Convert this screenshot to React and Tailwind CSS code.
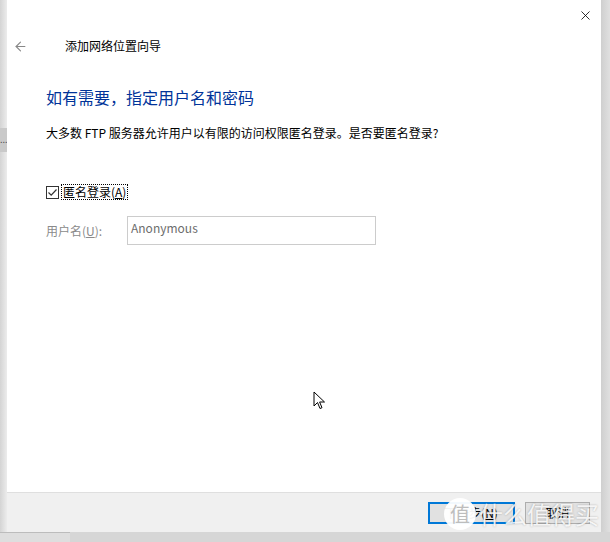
import React from 'react';
import { ArrowLeft, X } from 'lucide-react';

const font = { fontFamily: '"Noto Sans CJK SC", "Noto Sans", sans-serif' };

const Checkbox = () => (
  <div className="w-[13px] h-[13px] border border-[#333] bg-white flex items-center justify-center">
    <svg width="11" height="11" viewBox="0 0 11 11">
      <path d="M1.5 5.5 L4.2 8.2 L9.5 2.5" fill="none" stroke="#333" strokeWidth="1.2" />
    </svg>
  </div>
);

const Cursor = () => (
  <svg width="14" height="20" viewBox="0 0 14 20">
    <path d="M1 1 L1 15 L4.5 11.5 L7 17.5 L9 16.7 L6.6 11 L11.5 11 Z" fill="#fff" stroke="#000" strokeWidth="1" />
  </svg>
);

export default function App() {
  return (
    <div className="w-[610px] h-[542px] overflow-hidden bg-[#d9d9d9] flex flex-col" style={font}>
      <div className="flex flex-1">
        <div className="w-[7px] bg-gradient-to-r from-[#d4d4d4] to-[#ececec] flex flex-col">
          <div className="h-[128px]" />
          <div className="h-[24px] bg-[#c9c9c9] text-[9px] leading-[24px] text-[#555]">...</div>
        </div>
        <div className="w-[594px] h-[532px] bg-white flex flex-col relative">
          <div className="h-[30px] flex justify-end items-start">
            <button className="w-[30px] h-[30px] flex items-center justify-center mr-[1px]">
              <X size={15} strokeWidth={1.3} className="text-black" />
            </button>
          </div>
          <div className="h-[32px] flex items-center">
            <ArrowLeft size={15} strokeWidth={1.8} className="text-[#888] ml-[6px]" />
            <span className="ml-[37px] text-[12px] text-black">添加网络位置向导</span>
          </div>
          <div className="px-[39px] flex flex-col">
            <div className="mt-[24px] text-[16px] leading-[22px] text-[#003399]">如有需要，指定用户名和密码</div>
            <div className="mt-[17px] text-[12px] leading-[16px] text-black">
              大多数 FTP 服务器允许用户以有限的访问权限匿名登录。是否要匿名登录?
            </div>
            <div className="mt-[43px] flex items-center h-[16px]">
              <Checkbox />
              <span className="ml-[2px] text-[12px] leading-[14px] text-black border border-dotted border-black px-[1px]">
                匿名登录(<u>A</u>)
              </span>
            </div>
            <div className="mt-[16px] flex items-center">
              <span className="w-[81px] text-[12px] text-[#8a8a8a]">用户名(<u>U</u>):</span>
              <div className="w-[249px] h-[29px] border border-[#cccccc] pl-[3px] text-[12px] leading-[22px] text-[#6d6d6d]">
                Anonymous
              </div>
            </div>
          </div>
          <div className="flex-1 flex items-start">
            <div className="ml-[306px] mt-[146px]">
              <Cursor />
            </div>
          </div>
          <div className="h-[40px] bg-[#f0f0f0] border-t border-[#dfdfdf] flex items-center justify-end pr-[11px] gap-[10px] relative">
            <button className="w-[87px] h-[22px] border-2 border-[#0078d7] bg-[#e1e1e1] text-[12px] text-black flex items-center justify-center">
              下一步(<u>N</u>)
            </button>
            <button className="w-[65px] h-[22px] border border-[#adadad] bg-[#e1e1e1] text-[12px] text-black flex items-center justify-center">
              取消
            </button>
            <div className="absolute left-[437px] top-[5px] h-[32px] flex items-center gap-[3px] whitespace-nowrap">
              <div className="w-[32px] h-[32px] shrink-0 rounded-full bg-white/95 flex items-center justify-center text-[20px] leading-none text-[#bdbdbd]">值</div>
              <span className="text-[24px] leading-none text-white/85 [text-shadow:0_0_2px_rgba(0,0,0,0.3)]">什么值得买</span>
            </div>
          </div>
        </div>
        <div className="flex-1 bg-gradient-to-r from-[#cfcfcf] to-[#e0e0e0]" />
      </div>
      <div className="h-[10px] bg-[#d6d6d6] flex">
        <div className="w-[70px] border-t border-[#bcbcbc] bg-[#dedede]" />
      </div>
    </div>
  );
}
